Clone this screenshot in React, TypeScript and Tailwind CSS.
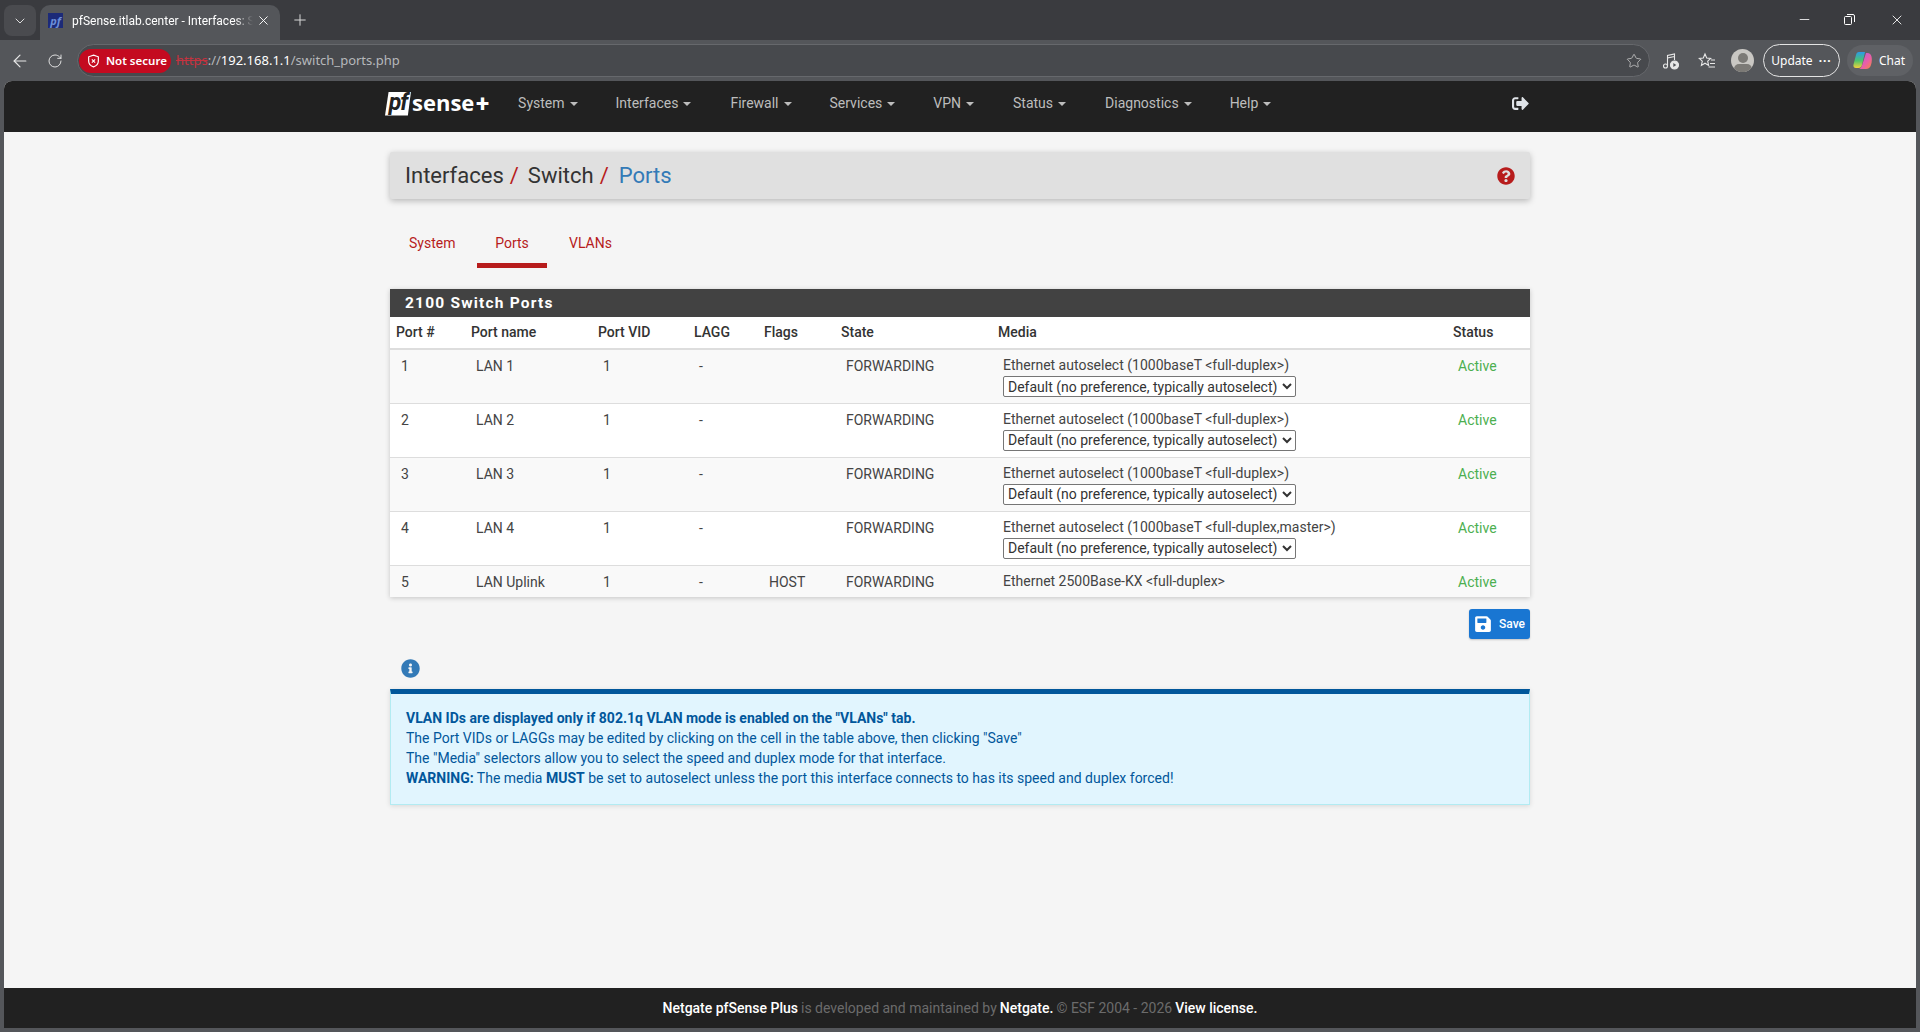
import { ArrowLeft, ChevronDown, Minus, Plus, RotateCw, Star, X } from "lucide-react";
import { FaInfoCircle, FaQuestionCircle, FaSave, FaSignOutAlt } from "react-icons/fa";

const navItems = [
  { label: "System", cls: "ml-[29px]" },
  { label: "Interfaces", cls: "ml-[38px]" },
  { label: "Firewall", cls: "ml-[39px]" },
  { label: "Services", cls: "ml-[38px]" },
  { label: "VPN", cls: "ml-[38px]" },
  { label: "Status", cls: "ml-[39px]" },
  { label: "Diagnostics", cls: "ml-[39px]" },
  { label: "Help", cls: "ml-[38px]" },
];

const ports = [
  { id: 1, name: "LAN 1", flags: "", media: "Ethernet autoselect (1000baseT <full-duplex>)", select: true },
  { id: 2, name: "LAN 2", flags: "", media: "Ethernet autoselect (1000baseT <full-duplex>)", select: true },
  { id: 3, name: "LAN 3", flags: "", media: "Ethernet autoselect (1000baseT <full-duplex>)", select: true },
  { id: 4, name: "LAN 4", flags: "", media: "Ethernet autoselect (1000baseT <full-duplex,master>)", select: true },
  { id: 5, name: "LAN Uplink", flags: "HOST", media: "Ethernet 2500Base-KX <full-duplex>", select: false },
];

function BrowserChrome() {
  return (
    <>
      <div className="h-10 bg-[#3a3b3f] flex items-start pt-[5px] pl-1 shrink-0">
        <div className="w-8 h-[31px] rounded-lg bg-[#4a4b4f] flex items-center justify-center text-[#dcdcdc] shrink-0">
          <ChevronDown size={16} strokeWidth={1.5} />
        </div>
        <div className="ml-1 w-60 h-[35px] rounded-t-[10px] bg-[#54565a] flex items-center pl-2 pr-[9px] pb-1 text-white shrink-0">
          <div className="w-[15px] h-[15px] bg-[#1c2a78] text-[#6d8fd8] text-[11px] leading-[15px] italic font-bold text-center shrink-0">pf</div>
          <span className="ml-[9px] text-[12px] font-['Roboto'] whitespace-nowrap overflow-hidden flex-1 [mask-image:linear-gradient(to_right,black_90%,transparent)]">pfSense.itlab.center - Interfaces: Sw</span>
          <X size={15} strokeWidth={1.5} className="ml-[3px] shrink-0" />
        </div>
        <Plus size={18} strokeWidth={1.3} className="ml-[11px] mt-[6px] text-[#dcdcdc] shrink-0" />
        <div className="flex-1" />
        <Minus size={15} strokeWidth={1.3} className="mt-[7px] text-white shrink-0" />
        <svg width="13" height="13" viewBox="0 0 13 13" fill="none" stroke="white" strokeWidth="1" className="ml-[31px] mt-[8px] shrink-0">
          <rect x="1.5" y="3.5" width="7" height="8" rx="1" />
          <path d="M4 1.5h6a1.5 1.5 0 0 1 1.5 1.5v6" />
        </svg>
        <X size={16} strokeWidth={1.3} className="ml-[33px] mr-[15px] mt-[7px] text-white shrink-0" />
      </div>

      <div className="h-[41px] bg-[#54565a] flex items-center pl-[10px] pr-[7px] shrink-0">
        <ArrowLeft size={20} strokeWidth={1.4} className="text-[#e8e8e8] shrink-0" />
        <RotateCw size={16} strokeWidth={1.4} className="ml-[17px] text-[#e8e8e8] shrink-0" />
        <div className="ml-[14px] flex-1 h-[33px] rounded-full bg-[#47494d] border border-[#66686c] flex items-center pl-[1px] pr-[7px]">
          <div className="h-6 w-[92px] rounded-full bg-[#c40a20] flex items-center pl-2 gap-[6px] text-white text-[11.500px] font-semibold whitespace-nowrap shrink-0">
            <svg width="13" height="14" viewBox="0 0 12 13" fill="none" stroke="white" strokeWidth="1.1" className="shrink-0">
              <path d="M6 1 10.500 2.600v4c0 2.600-2 4.600-4.500 5.400C3.500 11.200 1.500 9.200 1.500 6.600v-4z" />
              <path d="m4.500 5 3 3m0-3-3 3" />
            </svg>
            Not secure
          </div>
          <span className="ml-[5px] text-[13px] text-[#c6323f] line-through">https</span>
          <span className="text-[13px] text-[#b6b8bb]">://</span>
          <span className="text-[13px] text-white">192.168.1.1</span>
          <span className="text-[13px] text-[#b6b8bb]">/switch_ports.php</span>
          <div className="flex-1" />
          <Star size={16} strokeWidth={1.2} className="text-[#c8c8c8] shrink-0" />
        </div>
        <svg width="18" height="18" viewBox="0 0 18 18" fill="none" stroke="#e8e8e8" strokeWidth="1.1" className="ml-3 shrink-0">
          <circle cx="3.500" cy="14" r="2" />
          <path d="M5.500 14V3.500l7-1.500v6M5.500 6l7-1.500" />
          <circle cx="12.500" cy="13" r="4" fill="#e8e8e8" />
          <path d="m11.300 11v4l3-2z" fill="#54565a" stroke="none" />
        </svg>
        <svg width="18" height="18" viewBox="0 0 18 18" fill="none" stroke="#e8e8e8" strokeWidth="1.1" className="ml-[18px] shrink-0">
          <path d="m7 2 1.700 4 4 .4-3 2.800.9 4.200L7 11.200l-3.600 2.200.9-4.200-3-2.800 4-.4z" />
          <path d="M13 8h4M12 11.500h5M10.500 15h6.500" />
        </svg>
        <div className="ml-[15px] w-[23px] h-[23px] rounded-full bg-[#c9c7c3] overflow-hidden shrink-0">
          <div className="mx-auto mt-1 w-[10px] h-[10px] rounded-full bg-[#7c7a76]" />
          <div className="mx-auto mt-[1px] w-[18px] h-[10px] rounded-full bg-[#7c7a76]" />
        </div>
        <div className="ml-[9px] w-[77px] h-[33px] rounded-full border border-[#e4e4e4] flex items-center justify-center gap-[6px] text-white text-[12px] shrink-0">
          Update <span className="text-[12px] font-bold tracking-[1px] leading-none">···</span>
        </div>
        <div className="ml-[7px] w-[66px] h-[31px] rounded-full bg-[#5f6165] flex items-center pl-[6px] text-white text-[12px] shrink-0">
          <svg width="19" height="21" viewBox="0 0 19 21" className="shrink-0">
            <defs>
              <linearGradient id="cpA" x1="0" y1="0" x2="0" y2="1">
                <stop offset="0" stopColor="#2b9be8" />
                <stop offset="0.55" stopColor="#4fc46a" />
                <stop offset="1" stopColor="#f2d13c" />
              </linearGradient>
              <linearGradient id="cpB" x1="0" y1="0" x2="1" y2="1">
                <stop offset="0" stopColor="#b45de0" />
                <stop offset="0.6" stopColor="#ea5fa6" />
                <stop offset="1" stopColor="#f58a3c" />
              </linearGradient>
            </defs>
            <path d="M6 2h6l-3 13c-.4 2-1.500 3-3.500 3H3C1 18 0 16.500 .5 14.500L3 5c.4-2 1.400-3 3-3z" fill="url(#cpA)" />
            <path d="M13 3h1.500c2 0 3.500 1.500 4 3.500.6 2.500.4 6-.5 8.500-.8 2.500-2.500 4-5 4H6c1.500-.5 2.500-2 3-3.500z" fill="url(#cpB)" />
          </svg>
          <span className="ml-[7px]">Chat</span>
        </div>
      </div>
    </>
  );
}

function NavBar() {
  return (
    <div className="h-[51px] bg-[#212121] shrink-0 flex items-center pl-[381px] pb-[6px] text-[14px] text-[#bdbdbd] rounded-t-lg">
      <div className="flex items-center font-bold text-white">
        <div className="w-[26px] h-6 bg-white text-[#212121] italic text-[23px] leading-[22px] text-center tracking-[-1px] [clip-path:polygon(14%_0,100%_0,88%_100%,0_100%)]">pf</div>
        <span className="text-[22px] leading-none font-['Open_Sans'] ml-[1px] mb-[3px] w-[64px]">sense</span>
        <span className="text-[24px] leading-none">+</span>
      </div>
      {navItems.map((item) => (
        <div key={item.label} className={`flex items-center gap-[5px] ${item.cls}`}>
          {item.label}
          <span className="w-0 h-0 border-x-4 border-x-transparent border-t-4 border-t-[#bdbdbd]" />
        </div>
      ))}
      <FaSignOutAlt size={17} className="absolute left-[1512px] top-[95px] text-[#dfe3e8]" />
    </div>
  );
}

function SwitchTable() {
  const th = "text-left font-medium text-[14px] text-[#333333] pl-[6px] align-middle";
  const td = "pl-[11px] pt-[6px] align-top";
  return (
    <div className="mt-[21px] shadow-[0_1px_5px_rgba(0,0,0,0.2)]">
      <div className="h-7 bg-[#424242] text-white font-bold text-[15.500px] leading-[29px] pl-[15px] tracking-[1.2px]">2100 Switch Ports</div>
      <table className="w-full table-fixed bg-white text-[14px] text-[#444444] border-collapse">
        <thead>
          <tr className="h-8 border-b-2 border-[#dddddd]">
            <th className={`${th} w-[75px]`}>Port #</th>
            <th className={`${th} w-[127px]`}>Port name</th>
            <th className={`${th} w-[96px]`}>Port VID</th>
            <th className={`${th} w-[70px]`}>LAGG</th>
            <th className={`${th} w-[77px]`}>Flags</th>
            <th className={`${th} w-[157px]`}>State</th>
            <th className={`${th} w-[455px]`}>Media</th>
            <th className={th}>Status</th>
          </tr>
        </thead>
        <tbody>
          {ports.map((p) => (
            <tr key={p.id} className={`border-b border-[#dddddd] last:border-b-0 ${p.id % 2 === 1 ? "bg-[#f9f9f9]" : "bg-white"} ${p.select ? "h-[54px]" : "h-8"}`}>
              <td className={td}>{p.id}</td>
              <td className={td}>{p.name}</td>
              <td className={td}>{1}</td>
              <td className={td}>-</td>
              <td className={td}>{p.flags}</td>
              <td className={td}>FORWARDING</td>
              <td className={td}>
                <div className="leading-[18px]">{p.media}</div>
                {p.select && (
                  <select className="mt-[2px] block h-[21px] w-[293px] bg-white border border-[#767676] rounded-[2px] text-[14px] text-[#333333]">
                    <option>Default (no preference, typically autoselect)</option>
                  </select>
                )}
              </td>
              <td className={`${td} text-[#4caf50]`}>Active</td>
            </tr>
          ))}
        </tbody>
      </table>
    </div>
  );
}

export default function App() {
  return (
    <div className="h-[1032px] w-[1920px] overflow-hidden bg-[#54565a] flex flex-col font-['Noto_Sans',sans-serif] relative">
      <BrowserChrome />
      <div className="flex-1 min-h-0 ml-1 mr-1 mb-1 flex flex-col bg-[#f5f5f5] rounded-t-lg font-['Roboto',sans-serif]">
        <NavBar />
        <div className="flex-1 min-h-0 pl-[386px] pr-[386px] pt-[20px]">
          <div className="h-[47px] bg-[#e0e0e0] rounded-[2px] shadow-[0_2px_6px_rgba(0,0,0,0.25)] flex items-center pl-[15px] pr-[15px] text-[22px] text-[#333333]">
            <span>Interfaces</span>
            <span className="ml-[6px] text-[#b71c1c]">/</span>
            <span className="ml-[9px]">Switch</span>
            <span className="ml-[6px] text-[#b71c1c]">/</span>
            <span className="ml-[10px] text-[#337ab7]">Ports</span>
            <FaQuestionCircle size={18} className="ml-auto text-[#b71c1c]" />
          </div>

          <div className="mt-[26px] flex text-[14px] text-[#b71c1c] h-[43px]">
            <div className="w-[87px] pl-[19px] pt-2">System</div>
            <div className="w-[70px] text-center pt-2 border-b-[5px] border-[#b71c1c]">Ports</div>
            <div className="ml-[22px] pt-2">VLANs</div>
          </div>

          <SwitchTable />

          <div className="flex justify-end mt-3">
            <div className="w-[61px] h-[30px] rounded-[3px] bg-[#1976d2] text-white text-[12px] font-medium flex items-center pl-[5px] gap-[7px] shadow-[0_1px_2px_rgba(0,0,0,0.2)]">
              <FaSave size={18} />
              Save
            </div>
          </div>

          <FaInfoCircle size={19} className="mt-[20px] ml-[11px] text-[#337ab7]" />

          <div className="mt-[11px] h-[116px] bg-[#e1f5fe] border border-[#b2ebf2] border-t-[5px] border-t-[#01579b] shadow-[0_1px_5px_rgba(0,0,0,0.12)] pl-[15px] pt-[14px] text-[14px] leading-5 text-[#01579b]">
            <div><b className="font-bold">VLAN IDs are displayed only if 802.1q VLAN mode is enabled on the "VLANs" tab.</b></div>
            <div>The Port VIDs or LAGGs may be edited by clicking on the cell in the table above, then clicking "Save"</div>
            <div>The "Media" selectors allow you to select the speed and duplex mode for that interface.</div>
            <div><b className="font-bold">WARNING:</b> The media <b className="font-bold">MUST</b> be set to autoselect unless the port this interface connects to has its speed and duplex forced!</div>
          </div>
        </div>
        <div className="h-10 bg-[#212121] shrink-0 flex items-center justify-center text-[14px] text-[#6b6b6b]">
          <span className="font-medium text-white">Netgate pfSense Plus</span>
          <span className="ml-[3px]">is developed and maintained by</span>
          <span className="ml-[3px] font-medium text-white">Netgate.</span>
          <span className="ml-[3px]">© ESF 2004 - 2026</span>
          <span className="ml-[3px] font-medium text-white">View license.</span>
        </div>
      </div>
    </div>
  );
}
